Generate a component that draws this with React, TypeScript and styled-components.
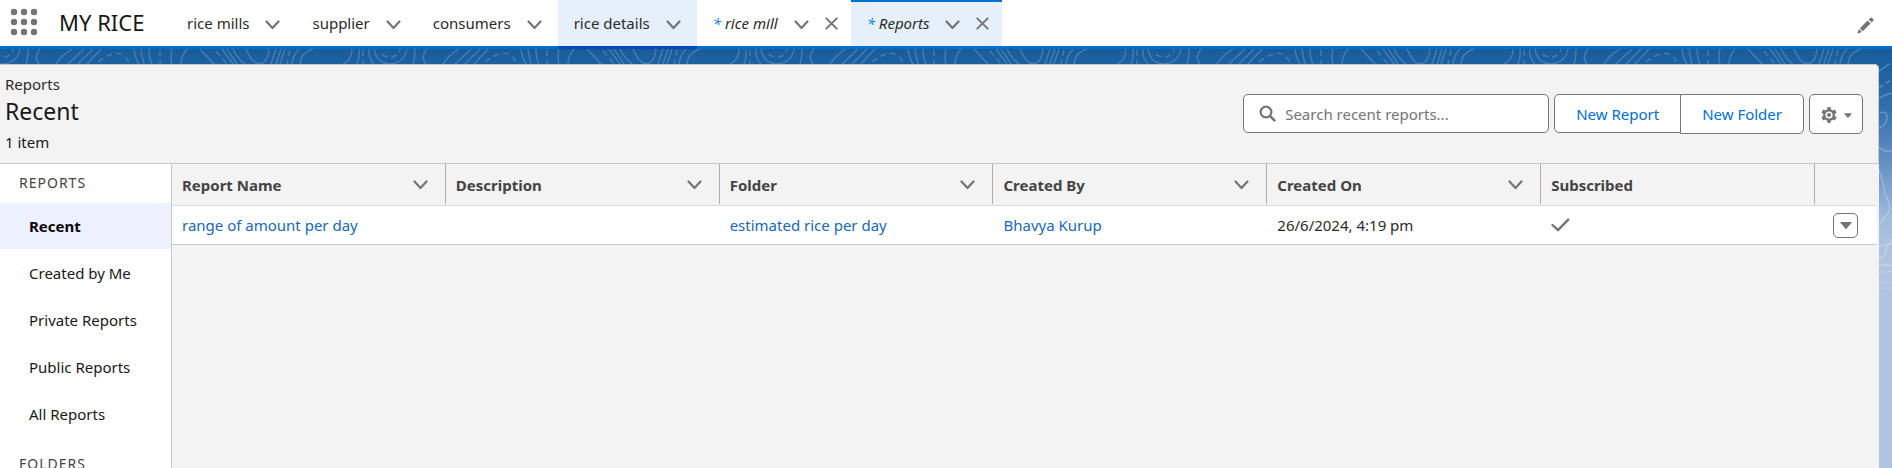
import React from 'react';
import styled, { createGlobalStyle, css } from 'styled-components';

const GlobalStyle = createGlobalStyle`
  *, *::before, *::after { box-sizing: border-box; }
  body {
    margin: 0;
    font-family: "Noto Sans", "Open Sans", sans-serif;
    font-size: 15px;
    line-height: 20px;
    color: #181818;
  }
  button, input { font: inherit; }
  a { text-decoration: none; }
  svg { display: block; }
`;

const Shell = styled.div`
  display: flex;
  flex-direction: column;
  height: 100vh;
  overflow: hidden;
`;

/* ---------- navigation ---------- */

const NavBar = styled.header`
  display: flex;
  align-items: stretch;
  flex: none;
  height: 49px;
  border-bottom: 3px solid #0070d2;
  background: #fff;
`;

const IconButton = styled.button`
  display: flex;
  align-items: center;
  justify-content: center;
  flex: none;
  padding: 0;
  border: 0;
  background: none;
  color: #747474;
  cursor: pointer;
`;

const Launcher = styled(IconButton)`
  width: 48px;
  padding-bottom: 2px;
`;

const AppName = styled.span`
  display: flex;
  align-items: center;
  flex: none;
  width: 123px;
  padding-left: 11px;
  font-size: 22px;
  line-height: 30px;
  padding-bottom: 2px;
  white-space: nowrap;
`;

const TabList = styled.nav`
  display: flex;
  flex: 1;
`;

const Tab = styled.div<{ $state?: 'hover' | 'active'; $closable?: boolean }>`
  display: flex;
  align-items: center;
  gap: 16px;
  height: 46px;
  padding: 0 ${(p) => (p.$closable ? 13 : 16)}px 0 16px;
  ${(p) =>
    p.$state &&
    css`
      background: #e5f0fa;
    `}
  ${(p) =>
    p.$state === 'hover' &&
    css`
      height: 49px;
      border-bottom: 3px solid #014bbf;
    `}
  ${(p) =>
    p.$state === 'active' &&
    css`
      padding-bottom: 2px;
      border-top: 2px solid #0070d2;
    `}
`;

const TabLink = styled.a<{ $unsaved?: boolean }>`
  color: #2b2b2b;
  font-style: ${(p) => (p.$unsaved ? 'italic' : 'normal')};
  white-space: nowrap;
`;

const UnsavedMark = styled.span`
  color: #0b80dc;
`;

const TabMenuButton = styled(IconButton)`
  padding-top: 3px;
`;

const EditButton = styled(IconButton)`
  width: 54px;
  padding-top: 4px;
`;

/* ---------- page ---------- */

const Page = styled.main`
  display: flex;
  flex-direction: column;
  flex: 1;
  min-height: 0;
  background: linear-gradient(
    to bottom,
    #195a95 0,
    #1b5f9e 6px,
    #1d61a0 20px,
    #3470ac 60px,
    #6b94c5 120px,
    #a3bbdc 170px,
    #b0c4df 210px
  );
`;

const Body = styled.div`
  display: flex;
  flex: 1;
  min-height: 0;
`;

const Panel = styled.section`
  display: flex;
  flex-direction: column;
  flex: 1;
  min-width: 0;
  border-top-right-radius: 5px;
  background: #f3f3f3;
`;

const PanelHeader = styled.div`
  display: flex;
  justify-content: space-between;
  align-items: flex-start;
  flex: none;
  height: 100px;
  padding: 9px 15px 0 5px;
  border: 1px solid #c9c9c9;
  border-left: 0;
  border-top-right-radius: 5px;
`;

const Crumb = styled.p`
  margin: 0;
  color: #2b2b2b;
`;

const Title = styled.h1`
  margin: 2px 0 6px;
  font-size: 23px;
  font-weight: 400;
  line-height: 30px;
`;

const Count = styled.p`
  margin: 0;
`;

const Actions = styled.div`
  display: flex;
  align-items: flex-start;
  gap: 5px;
  padding-top: 20px;
`;

const SearchBox = styled.label`
  display: flex;
  align-items: center;
  gap: 9px;
  width: 306px;
  height: 39px;
  padding: 0 15px;
  border: 1px solid #747474;
  border-radius: 5px;
  background: #fff;
  color: #747474;
`;

const SearchInput = styled.input`
  flex: 1;
  min-width: 0;
  padding: 0;
  border: 0;
  outline: 0;
  background: none;
  &::placeholder { color: #747474; opacity: 1; }
`;

const ButtonGroup = styled.div`
  display: flex;
`;

const Button = styled.button`
  height: 40px;
  padding: 0 21px;
  border: 1px solid #747474;
  background: #fff;
  color: #0070d2;
  white-space: nowrap;
  cursor: pointer;
  &:first-child { height: 39px; border-radius: 5px 0 0 5px; }
  &:last-child { margin-left: -1px; border-radius: 0 5px 5px 0; }
`;

const SettingsButton = styled(IconButton)`
  gap: 7px;
  width: 54px;
  height: 40px;
  padding-top: 2px;
  border: 1px solid #747474;
  border-radius: 5px;
  background: #fff;
`;

const Content = styled.div`
  display: flex;
  flex: 1;
  min-height: 0;
`;

const Sidebar = styled.aside`
  flex: none;
  width: 172px;
  border-right: 1px solid #c9c9c9;
  background: #fff;
`;

const GroupTitle = styled.h2`
  margin: 0;
  padding: 9px 0 10px 19px;
  font-size: 14px;
  font-weight: 400;
  line-height: 20px;
  letter-spacing: 1px;
  color: #444;
`;

const GroupList = styled.ul`
  display: flex;
  flex-direction: column;
  gap: 1px;
  margin: 0 0 8px;
  padding: 0;
  list-style: none;
`;

const GroupLink = styled.a<{ $current?: boolean }>`
  display: block;
  padding: 13px 0 13px 29px;
  color: #181818;
  ${(p) =>
    p.$current &&
    css`
      background: #eef1ff;
      color: #080808;
      font-weight: 700;
    `}
`;

/* ---------- table ---------- */

const TableArea = styled.div`
  flex: 1;
  min-width: 0;
  padding-right: 2px;
`;

const Table = styled.table`
  width: 100%;
  table-layout: fixed;
  border-collapse: separate;
  border-spacing: 0;
`;

const ActionCol = styled.col`
  width: 62px;
`;

const HeadCell = styled.th`
  height: 42px;
  padding: 0 0 1px;
  border-bottom: 1px solid #dddbda;
  text-align: left;
  vertical-align: top;
`;

const HeadInner = styled.div<{ $last?: boolean }>`
  display: flex;
  align-items: center;
  justify-content: space-between;
  height: 40px;
  padding: 2px 17px 0 10px;
  border-right: ${(p) => (p.$last ? '0' : '1px solid #aeaeae')};
  color: #444;
`;

const Cell = styled.td`
  height: 39px;
  padding: 0 10px;
  border-bottom: 1px solid #c9c9c9;
  background: #fff;
  color: #2b2b2b;
  white-space: nowrap;
`;

const ActionCell = styled(Cell)`
  padding: 0 18px;
`;

const CellLink = styled.a`
  color: #1a68b3;
`;

const RowButton = styled(IconButton)`
  width: 25px;
  height: 25px;
  border: 1px solid #747474;
  border-radius: 5px;
  background: #fff;
`;

/* ---------- drawings ---------- */

const Chevron = () => (
  <svg width="15" height="10" viewBox="0 0 15 10" fill="none" stroke="#747474" strokeWidth="2.2" strokeLinecap="round" strokeLinejoin="round" aria-hidden="true">
    <path d="M1.5 1.5 7.5 8 13.5 1.5" />
  </svg>
);

const Cross = () => (
  <svg width="13" height="13" viewBox="0 0 13 13" fill="none" stroke="#747474" strokeWidth="1.9" strokeLinecap="round" aria-hidden="true">
    <path d="M1.3 1.3 11.7 11.7M11.7 1.3 1.3 11.7" />
  </svg>
);

const Dots = () => (
  <svg width="28" height="28" viewBox="0 0 28 28" fill="currentColor" aria-hidden="true">
    {[4, 14, 24].map((y) => [4, 14, 24].map((x) => <circle key={`${x}-${y}`} cx={x} cy={y} r="3.2" />))}
  </svg>
);

const Pencil = () => (
  <svg width="17" height="17" viewBox="0 0 17 17" fill="currentColor" aria-hidden="true">
    <path d="M10.6 3.4 13.6 6.4 6.3 13.7a.8.8 0 0 1-1.1 0L3.3 11.8a.8.8 0 0 1 0-1.1Z" />
    <path d="M11.6 2.4 13.1.9a1.3 1.3 0 0 1 1.9 0L16.1 2a1.3 1.3 0 0 1 0 1.9L14.6 5.4Z" />
    <path d="M2.1 12.1 4.9 14.9.9 16.5a.4.4 0 0 1-.5-.5Z" />
  </svg>
);

const Magnifier = () => (
  <svg width="17" height="17" viewBox="0 0 17 17" fill="none" stroke="currentColor" aria-hidden="true">
    <circle cx="7" cy="7" r="5.4" strokeWidth="2.2" />
    <path d="M11.2 11.2 15.4 15.4" strokeWidth="2.6" strokeLinecap="round" />
  </svg>
);

const Gear = () => (
  <svg width="16" height="16" viewBox="0 0 16 16" fill="none" stroke="currentColor" aria-hidden="true">
    <circle cx="8" cy="8" r="4.8" strokeWidth="2.4" />
    <circle cx="8" cy="8" r="2" fill="currentColor" stroke="none" />
    <g strokeWidth="3.6">
      {[0, 60, 120, 180, 240, 300].map((a) => (
        <path key={a} d="M8 .2V2.8" transform={`rotate(${a} 8 8)`} />
      ))}
    </g>
  </svg>
);

const Caret = ({ width = 12, height = 7 }: { width?: number; height?: number }) => (
  <svg width={width} height={height} viewBox="0 0 12 7" fill="currentColor" aria-hidden="true">
    <path d="M.8 0H11.2a.5.5 0 0 1 .4.8L6.5 6.7a.7.7 0 0 1-1 0L.4.8A.5.5 0 0 1 .8 0Z" />
  </svg>
);

const Tick = () => (
  <svg width="19" height="14" viewBox="0 0 19 14" fill="none" stroke="#747474" strokeWidth="2.4" strokeLinecap="round" strokeLinejoin="round" role="img" aria-label="Subscribed">
    <path d="M1.5 7 7 12.2 17.2 1.6" />
  </svg>
);

const contourSolid = [
  'M-13 0Q-11 15 4 15Q18 13 20 0',
  'M28 0Q28 9 26 15', 'M40 0Q33 8 39 15',
  'M72 0Q62 6 56 15', 'M84 0 68 15', 'M93 0 78 15', 'M101 0 87 15',
  'M134 0Q135 9 139 15', 'M141 0Q142 8 144 15', 'M149 0Q149 9 152 15',
  'M172 0Q170 8 172 15', 'M187 0Q181 7 181 15', 'M200 0 214 15',
  'M222 0 233 15', 'M227 0 237 15', 'M233 0Q237 9 245 15',
  'M246 0Q252 15 260 15Q268 13 269 0',
  'M276 0 271 15', 'M281 0 276 15', 'M285 0 280 15',
  'M299 0Q293 6 292 15', 'M313 0Q301 3 300 15',
  'M352 0Q352 11 343 15', 'M359 0Q360 9 357 15', 'M369 0Q368 9 374 15',
  'M374 0Q376 15 391 15',
].join('');

const contourDashed = [
  'M-5 5Q3 12 10 5Q13 3 13 0', 'M98 13Q112 2 121 5Q128 9 129 15', 'M160 1V15',
  'M216 2 227 15', 'M290 1 287 15', 'M363 1V15', 'M382 5Q386 9 392 8',
].join('');

const TopContours = () => (
  <svg width="100%" height="15" fill="none" stroke="#fff" strokeOpacity=".2" strokeWidth="1.3" aria-hidden="true">
    <defs>
      <pattern id="contours" width="387" height="15" patternUnits="userSpaceOnUse">
        <path d={contourSolid} />
        <path d={contourDashed} strokeDasharray="6 4" />
      </pattern>
    </defs>
    <rect width="100%" height="15" fill="url(#contours)" stroke="none" />
  </svg>
);

const SideContours = () => (
  <svg width="13" height="230" fill="none" stroke="#fff" strokeOpacity=".26" strokeWidth="1.3" aria-hidden="true">
    <path d="M0 7 13 -2M0 34Q7 30 13 29M1 49Q8 46 8 54Q7 62 0 64M0 83Q5 88 13 87M0 107Q4 116 6 130Q13 142 9 149Q6 153 0 161M0 183Q5 180 13 180M0 193Q5 194 6 190Q8 181 13 176M0 202Q7 200 13 202" />
    <path d="M0 219Q6 217 13 219M0 225Q6 223 13 225" strokeOpacity=".12" />
    <path d="M0 24 13 15M0 209Q7 206 13 208" strokeDasharray="5 3" />
  </svg>
);

/* ---------- data ---------- */

interface TabItem {
  label: string;
  unsaved?: boolean;
  state?: 'hover' | 'active';
}

const tabs: TabItem[] = [
  { label: 'rice mills' },
  { label: 'supplier' },
  { label: 'consumers' },
  { label: 'rice details', state: 'hover' },
  { label: 'rice mill', unsaved: true },
  { label: 'Reports', unsaved: true, state: 'active' },
];

const columns = [
  { label: 'Report Name', sortable: true },
  { label: 'Description', sortable: true },
  { label: 'Folder', sortable: true },
  { label: 'Created By', sortable: true },
  { label: 'Created On', sortable: true },
  { label: 'Subscribed', sortable: false },
];

const reportViews = ['Recent', 'Created by Me', 'Private Reports', 'Public Reports', 'All Reports'];

export default function App() {
  return (
    <Shell>
      <GlobalStyle />
      <NavBar>
        <Launcher aria-label="App Launcher"><Dots /></Launcher>
        <AppName>MY RICE</AppName>
        <TabList>
          {tabs.map((t) => (
            <Tab key={t.label} $state={t.state} $closable={t.unsaved}>
              <TabLink href="#" $unsaved={t.unsaved}>
                {t.unsaved && <UnsavedMark>* </UnsavedMark>}
                {t.label}
              </TabLink>
              <TabMenuButton aria-label={`${t.label} menu`}><Chevron /></TabMenuButton>
              {t.unsaved && <IconButton aria-label={`Close ${t.label}`}><Cross /></IconButton>}
            </Tab>
          ))}
        </TabList>
        <EditButton aria-label="Edit navigation"><Pencil /></EditButton>
      </NavBar>

      <Page>
        <TopContours />
        <Body>
          <Panel>
            <PanelHeader>
              <div>
                <Crumb>Reports</Crumb>
                <Title>Recent</Title>
                <Count>1 item</Count>
              </div>
              <Actions>
                <SearchBox>
                  <Magnifier />
                  <SearchInput type="text" aria-label="Search recent reports" placeholder="Search recent reports..." />
                </SearchBox>
                <ButtonGroup>
                  <Button>New Report</Button>
                  <Button>New Folder</Button>
                </ButtonGroup>
                <SettingsButton aria-label="Settings">
                  <Gear />
                  <Caret width={8} height={5} />
                </SettingsButton>
              </Actions>
            </PanelHeader>

            <Content>
              <Sidebar>
                <GroupTitle>REPORTS</GroupTitle>
                <GroupList>
                  {reportViews.map((v, i) => (
                    <li key={v}><GroupLink href="#" $current={i === 0}>{v}</GroupLink></li>
                  ))}
                </GroupList>
                <GroupTitle>FOLDERS</GroupTitle>
              </Sidebar>

              <TableArea>
                <Table>
                  <colgroup>
                    {columns.map((c) => <col key={c.label} />)}
                    <ActionCol />
                  </colgroup>
                  <thead>
                    <tr>
                      {columns.map((c) => (
                        <HeadCell key={c.label} scope="col">
                          <HeadInner>
                            {c.label}
                            {c.sortable && <IconButton aria-label={`${c.label} actions`}><Chevron /></IconButton>}
                          </HeadInner>
                        </HeadCell>
                      ))}
                      <HeadCell scope="col" aria-label="Actions"><HeadInner $last /></HeadCell>
                    </tr>
                  </thead>
                  <tbody>
                    <tr>
                      <Cell><CellLink href="#">range of amount per day</CellLink></Cell>
                      <Cell />
                      <Cell><CellLink href="#">estimated rice per day</CellLink></Cell>
                      <Cell><CellLink href="#">Bhavya Kurup</CellLink></Cell>
                      <Cell>26/6/2024, 4:19 pm</Cell>
                      <Cell><Tick /></Cell>
                      <ActionCell><RowButton aria-label="Row actions"><Caret /></RowButton></ActionCell>
                    </tr>
                  </tbody>
                </Table>
              </TableArea>
            </Content>
          </Panel>
          <SideContours />
        </Body>
      </Page>
    </Shell>
  );
}
